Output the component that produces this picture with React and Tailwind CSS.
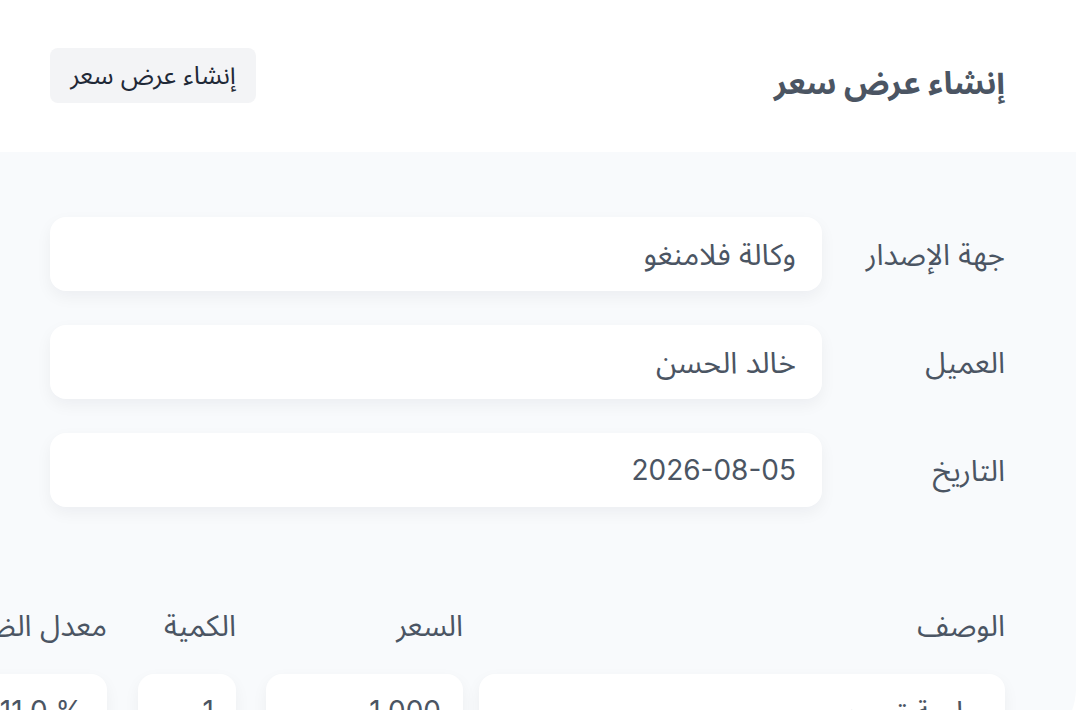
import React from "react";

const font = { fontFamily: "Inter, 'Noto Sans Arabic', 'Noto Sans', 'DejaVu Sans', sans-serif" };

function Field({ label, value, latin }) {
  return (
    <div className="flex h-[74px] items-center gap-[44px]">
      <div className="w-[139px] shrink-0 whitespace-nowrap text-[29.5px] leading-[40px] text-[#4b5563]">{label}</div>
      <div className={"h-[74px] w-[772px] shrink-0 rounded-2xl bg-white px-[26px] flex items-center leading-[40px] text-[#4b5563] shadow-[0_6px_16px_rgba(17,24,39,0.05)] " + (latin ? "text-[28px]" : "text-[30px]")}>
        {value}
      </div>
    </div>
  );
}

export default function App() {
  return (
    <div dir="rtl" style={font} className="min-h-[710px] w-[1076px] overflow-hidden bg-white">
      <header className="flex h-[152px] items-center justify-between pr-[71px] pl-[50px]">
        <h1 className="pt-[14px] text-[32px] font-bold text-[#4b5563]">إنشاء عرض سعر</h1>
        <button className="mb-[2px] h-[55px] w-[206px] rounded-lg bg-[#f3f4f6] text-[25.5px] text-[#1f2937]">
          إنشاء عرض سعر
        </button>
      </header>
      <section className="h-[600px] rounded-br-[64px] bg-[#f8fafc] pt-[65px] pr-[71px] pl-[50px]">
        <div className="flex flex-col gap-[34px]">
          <Field label="جهة الإصدار" value="وكالة فلامنغو" />
          <Field label="العميل" value="خالد الحسن" />
          <Field label="التاريخ" value="2026-08-05" latin />
        </div>
        <div className="mt-[98px] flex w-[1200px] text-[29.5px] leading-[40px] text-[#4b5563]">
          <div className="w-[526px] shrink-0 h-[40px] flex items-center">الوصف</div>
          <div className="w-[16px] shrink-0" />
          <div className="w-[197px] shrink-0 h-[40px] flex items-center">السعر</div>
          <div className="w-[30px] shrink-0" />
          <div className="w-[98px] shrink-0 h-[40px] flex items-center">الكمية</div>
          <div className="w-[31px] shrink-0" />
          <div className="w-[160px] shrink-0 h-[40px] flex items-center whitespace-nowrap">معدل الضريبة</div>
        </div>
        <div className="mt-[29px] flex w-[1200px] text-[28px] leading-[40px] text-[#4b5563]">
          <div className="h-[74px] w-[526px] shrink-0 rounded-2xl bg-white px-[23px] flex items-center text-[30px] shadow-[0_6px_16px_rgba(17,24,39,0.05)]">جلسة تصوير</div>
          <div className="w-[16px] shrink-0" />
          <div className="h-[74px] w-[197px] shrink-0 rounded-2xl bg-white px-[22px] flex items-center shadow-[0_6px_16px_rgba(17,24,39,0.05)]">1,000</div>
          <div className="w-[30px] shrink-0" />
          <div className="h-[74px] w-[98px] shrink-0 rounded-2xl bg-white px-[22px] flex items-center shadow-[0_6px_16px_rgba(17,24,39,0.05)]">1</div>
          <div className="w-[31px] shrink-0" />
          <div className="h-[74px] w-[160px] shrink-0 rounded-2xl bg-white px-[24px] flex items-center shadow-[0_6px_16px_rgba(17,24,39,0.05)]"><span dir="ltr">11.0 %</span></div>
        </div>
      </section>
    </div>
  );
}
